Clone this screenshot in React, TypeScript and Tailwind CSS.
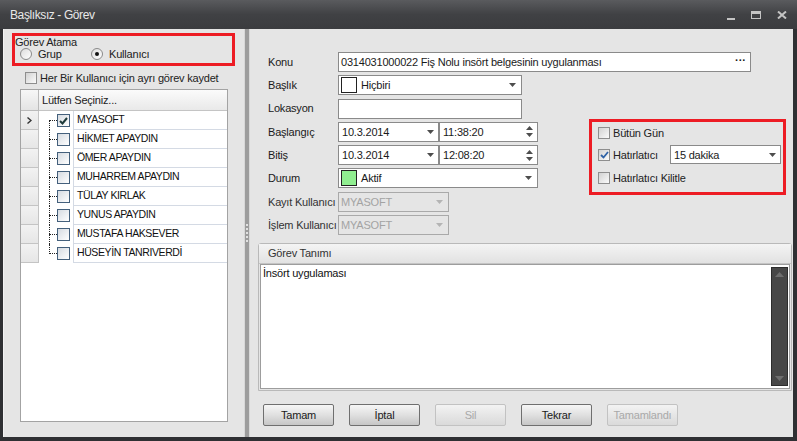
import React from "react";

const Arrow = ({ color = "#4d4d4d" }: { color?: string }) => (
  <svg width="7" height="4" viewBox="0 0 7 4">
    <path d="M0 0h7L3.5 4z" fill={color} />
  </svg>
);

function Spin() {
  return (
    <div className="flex flex-col gap-[3px] items-center">
      <svg width="7" height="4" viewBox="0 0 7 4">
        <path d="M0 4h7L3.5 0z" fill="#4d4d4d" />
      </svg>
      <svg width="7" height="4" viewBox="0 0 7 4">
        <path d="M0 0h7L3.5 4z" fill="#4d4d4d" />
      </svg>
    </div>
  );
}

function TreeBox({ checked }: { checked?: boolean }) {
  return (
    <div className="w-[13px] h-[13px] border border-[#44607c] bg-linear-to-br from-[#d6dbe1] to-white flex items-center justify-center">
      {checked && (
        <svg width="9" height="8" viewBox="0 0 9 8">
          <path d="M1 4l2.5 2.5L8 1" stroke="#1e3a3a" strokeWidth="2" fill="none" />
        </svg>
      )}
    </div>
  );
}

function CheckBox({ checked }: { checked?: boolean }) {
  return (
    <div className="w-[12px] h-[12px] border border-[#8e8e8e] bg-linear-to-br from-[#d2d2d2] to-[#fbfbfb] flex items-center justify-center shrink-0">
      {checked && (
        <svg width="9" height="8" viewBox="0 0 9 8">
          <path d="M1 4l2.5 2.5L8 1" stroke="#2f62a6" strokeWidth="1.8" fill="none" />
        </svg>
      )}
    </div>
  );
}

function Radio({ checked }: { checked?: boolean }) {
  return (
    <div className="w-[12px] h-[12px] rounded-full border border-[#8a8a8a] bg-linear-to-br from-[#dcdcdc] to-white flex items-center justify-center">
      {checked && <div className="w-[4px] h-[4px] rounded-full bg-[#111]" />}
    </div>
  );
}

const users = [
  "MYASOFT",
  "HİKMET APAYDIN",
  "ÖMER APAYDIN",
  "MUHARREM APAYDIN",
  "TÜLAY KIRLAK",
  "YUNUS APAYDIN",
  "MUSTAFA HAKSEVER",
  "HÜSEYİN TANRIVERDİ",
];

function Button({ label, disabled }: { label: string; disabled?: boolean }) {
  return (
    <div
      className={`w-[71px] h-[22px] rounded-[2px] border flex items-center justify-center ${
        disabled
          ? "border-[#c2c2c2] bg-linear-to-b from-[#f3f3f3] via-[#e6e6e6] to-[#dadada] text-[#a9a9a9]"
          : "border-[#6f6f6f] bg-linear-to-b from-[#f6f6f6] via-[#e0e0e0] to-[#c6c6c6] text-[#1a1a1a]"
      }`}
    >
      {label}
    </div>
  );
}

export default function App() {
  return (
    <div className="w-[797px] h-[441px] bg-[#2f3033] flex flex-col overflow-hidden font-['Liberation_Sans',Arial,sans-serif] text-[11px] tracking-[-0.2px] text-[#1a1a1a]">
      {/* Title bar */}
      <div className="h-[29px] shrink-0 bg-linear-to-b from-[#5a5b5e] via-[#404144] to-[#3b3c3f] flex items-center pl-[10px] pr-[10px]">
        <span className="text-[12px] tracking-[-0.4px] text-[#e8e8e8] mt-[1px]">Başlıksız - Görev</span>
        <div className="ml-auto flex items-center gap-[16px] mt-[1px]">
          <div className="w-[8px] h-[9px] flex items-end">
            <div className="w-[8px] h-[2px] bg-[#c4c4c4]" />
          </div>
          <div className="w-[10px] h-[8px] border border-[#c4c4c4] border-t-[3px]" />
          <svg width="10" height="8" viewBox="0 0 10 8">
            <path d="M1 0.5l8 7M9 0.5l-8 7" stroke="#c4c4c4" strokeWidth="2" />
          </svg>
        </div>
      </div>

      <div className="flex flex-1 min-h-0 pl-[3px] pr-[4px] pb-[4px]">
        {/* Left panel */}
        <div className="w-[241px] bg-[#e5e5e5] border-l border-[#f2f2f2] flex flex-col">
          <div className="mt-[4px] ml-[8px] w-[223px] h-[33px] border-[3px] border-[#ed1c24] flex flex-col">
            <div className="leading-[12px] h-[12px] text-[#222]">Görev Atama</div>
            <div className="flex items-center h-[12px] leading-[12px] ml-[5px]">
              <Radio />
              <span className="ml-[6px] w-[53px]">Grup</span>
              <Radio checked />
              <span className="ml-[6px]">Kullanıcı</span>
            </div>
          </div>

          <div className="flex items-center h-[12px] leading-[12px] mt-[6px] ml-[21px]">
            <CheckBox />
            <span className="ml-[3px] text-[#222]">Her Bir Kullanıcı için ayrı görev kaydet</span>
          </div>

          <div className="mt-[5px] ml-[16px] w-[208px] h-[333px] border border-[#a3a3a3] bg-white flex flex-col">
            <div className="flex h-[21px] shrink-0">
              <div className="w-[18px] border-r border-b border-[#bababa] bg-linear-to-b from-[#f7f7f7] to-[#e4e4e4]" />
              <div className="flex-1 border-b border-[#c4c4c4] bg-linear-to-b from-[#fbfbfb] to-[#e9e9e9] pl-[3px] flex items-center text-[#222]">
                Lütfen Seçiniz...
              </div>
            </div>
            {users.map((u, i) => (
              <div key={u} className="flex h-[19px] shrink-0">
                <div className="w-[18px] border-r border-b border-[#c4c4c4] bg-linear-to-b from-[#f2f2f2] to-[#e6e6e6] flex items-center justify-center">
                  {i === 0 && (
                    <svg width="5" height="7" viewBox="0 0 5 7">
                      <path d="M0.5 0.5L4 3.5L0.5 6.5" stroke="#333" strokeWidth="1.4" fill="none" />
                    </svg>
                  )}
                </div>
                <div className="w-[34px] relative flex items-center">
                  <div
                    className={`absolute left-[10px] w-0 border-l border-dotted border-[#222] ${
                      i === 0 ? "top-[9px] bottom-0" : i === users.length - 1 ? "top-0 h-[10px]" : "top-0 bottom-0"
                    }`}
                  />
                  <div className="absolute left-[10px] top-[9px] w-[8px] border-t border-dotted border-[#222]" />
                  <div className="ml-[18px]">
                    <TreeBox checked={i === 0} />
                  </div>
                </div>
                <div className="flex-1 border-l border-b border-[#d4dae4] pl-[3px] flex items-center text-[10.5px] tracking-[-0.4px] text-[#111]">
                  {u}
                </div>
              </div>
            ))}
          </div>
        </div>

        {/* Splitter */}
        <div className="w-[6px] bg-[#9d9d9d] border-l border-r border-[#d8d8d8] flex flex-col items-center justify-center gap-[2px]">
          {[0, 1, 2, 3, 4].map((d) => (
            <div key={d} className="w-[2px] h-[2px] bg-[#e2e2e2]" />
          ))}
        </div>

        {/* Right panel */}
        <div className="flex-1 bg-[#e5e5e5] flex flex-col">
          <div className="mt-[23px] ml-[18px] grid grid-cols-[70px_200px_51px_197px] grid-rows-[repeat(8,20px)] gap-y-[3.3px]">
            <div className="flex items-center">Konu</div>
            <div className="col-span-3 w-[413px] h-[20px] bg-white border border-[#8a8a8a] flex items-center pl-[2px] pr-[4px]">
              <span>0314031000022 Fiş Nolu insört belgesinin uygulanması</span>
              <span className="ml-auto font-bold tracking-[0px] leading-[8px] pb-[4px]">···</span>
            </div>

            <div className="flex items-center">Başlık</div>
            <div className="col-span-3 w-[184px] h-[20px] bg-white border border-[#8a8a8a] flex items-center pl-[2px] pr-[5px]">
              <div className="w-[16px] h-[16px] border border-[#222] bg-white" />
              <span className="ml-[4px]">Hiçbiri</span>
              <span className="ml-auto"><Arrow /></span>
            </div>

            <div className="flex items-center">Lokasyon</div>
            <div className="col-span-3 w-[184px] h-[20px] bg-white border border-[#8a8a8a]" />

            <div className="flex items-center">Başlangıç</div>
            <div className="flex">
              <div className="w-[101px] h-[20px] bg-white border border-[#8a8a8a] flex items-center pl-[3px] pr-[4px]">
                <span>10.3.2014</span>
                <span className="ml-auto"><Arrow /></span>
              </div>
              <div className="w-[99px] h-[20px] bg-white border border-[#8a8a8a] flex items-center pl-[3px] pr-[4px]">
                <span>11:38:20</span>
                <span className="ml-auto"><Spin /></span>
              </div>
            </div>
            <div />
            <div className="row-span-3 -mt-[3px] h-[76px] border-[3px] border-[#ed1c24] flex flex-col pl-[6px] pt-[4px]">
              <div className="flex items-center h-[14px]">
                <CheckBox />
                <span className="ml-[3px] text-[#222]">Bütün Gün</span>
              </div>
              <div className="flex items-center h-[20px] mt-[5px]">
                <CheckBox checked />
                <span className="ml-[3px] w-[57px] text-[#222]">Hatırlatıcı</span>
                <div className="w-[111px] h-[19px] bg-white border border-[#8a8a8a] flex items-center pl-[3px] pr-[4px]">
                  <span>15 dakika</span>
                  <span className="ml-auto"><Arrow /></span>
                </div>
              </div>
              <div className="flex items-center h-[14px] mt-[6px]">
                <CheckBox />
                <span className="ml-[3px] text-[#222]">Hatırlatıcı Kilitle</span>
              </div>
            </div>

            <div className="flex items-center">Bitiş</div>
            <div className="flex">
              <div className="w-[101px] h-[20px] bg-white border border-[#8a8a8a] flex items-center pl-[3px] pr-[4px]">
                <span>10.3.2014</span>
                <span className="ml-auto"><Arrow /></span>
              </div>
              <div className="w-[99px] h-[20px] bg-white border border-[#8a8a8a] flex items-center pl-[3px] pr-[4px]">
                <span>12:08:20</span>
                <span className="ml-auto"><Spin /></span>
              </div>
            </div>
            <div />

            <div className="flex items-center">Durum</div>
            <div className="w-[200px] h-[20px] bg-white border border-[#8a8a8a] flex items-center pl-[2px] pr-[5px]">
              <div className="w-[16px] h-[16px] border border-[#222] bg-[#90ee90]" />
              <span className="ml-[4px]">Aktif</span>
              <span className="ml-auto"><Arrow /></span>
            </div>
            <div />

            <div className="flex items-center text-[#333]">Kayıt Kullanıcı</div>
            <div className="col-span-3 w-[111px] h-[20px] border border-[#a9a9a9] flex items-center pl-[2px] pr-[5px] text-[#a3a3a3]">
              <span>MYASOFT</span>
              <span className="ml-auto"><Arrow color="#b4b4b4" /></span>
            </div>

            <div className="flex items-center text-[#333]">İşlem Kullanıcı</div>
            <div className="col-span-3 w-[111px] h-[20px] border border-[#a9a9a9] flex items-center pl-[2px] pr-[5px] text-[#a3a3a3]">
              <span>MYASOFT</span>
              <span className="ml-auto"><Arrow color="#b4b4b4" /></span>
            </div>
          </div>

          {/* Görev Tanımı */}
          <div className="mt-[8px] ml-[8px] w-[534px] h-[148px] border border-[#b9b9b9] rounded-t-[3px] flex flex-col">
            <div className="h-[20px] shrink-0 bg-linear-to-b from-[#f4f4f4] to-[#e2e2e2] border-b border-[#c4c4c4] flex items-center pl-[9px] text-[#333]">
              Görev Tanımı
            </div>
            <div className="flex-1 mx-[1px] mb-[1px] bg-white border border-[#9d9d9d] flex">
              <div className="flex-1 pl-[2px] text-[#111]">İnsört uygulaması</div>
              <div className="w-[17px] my-[2px] mr-[1px] bg-[#474747] border border-[#2c2c2c] flex flex-col items-center justify-between py-[4px]">
                <svg width="9" height="5" viewBox="0 0 9 5">
                  <path d="M0 5h9L4.5 0z" fill="#6e6e6e" />
                </svg>
                <svg width="9" height="5" viewBox="0 0 9 5">
                  <path d="M0 0h9L4.5 5z" fill="#6e6e6e" />
                </svg>
              </div>
            </div>
          </div>

          {/* Buttons */}
          <div className="mt-[13px] ml-[13px] flex gap-[15px]">
            <Button label="Tamam" />
            <Button label="İptal" />
            <Button label="Sil" disabled />
            <Button label="Tekrar" />
            <Button label="Tamamlandı" disabled />
          </div>
        </div>
      </div>
    </div>
  );
}
